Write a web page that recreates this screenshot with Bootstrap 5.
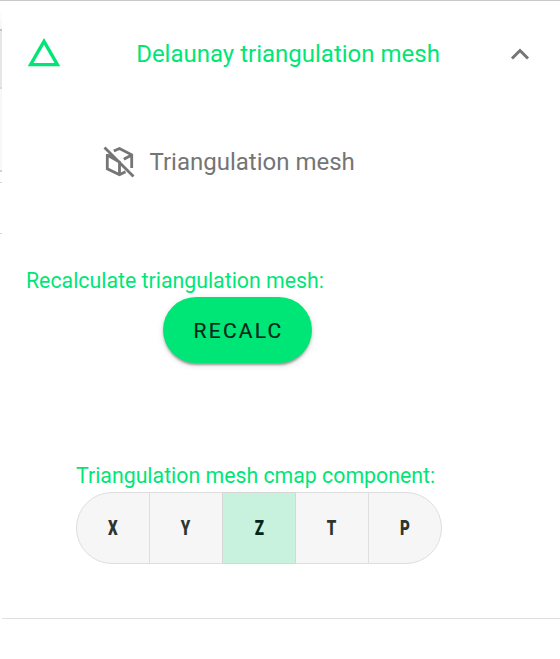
<!DOCTYPE html>
<html lang="en">
<head>
<meta charset="utf-8">
<meta name="viewport" content="width=device-width, initial-scale=1">
<title>Delaunay triangulation mesh</title>
<link href="https://cdn.jsdelivr.net/npm/bootstrap@5.3.0/dist/css/bootstrap.min.css" rel="stylesheet">
<style>
body{font-family:Roboto,sans-serif;height:659px;overflow:hidden;background:#fff}
.edge-strip{width:2px;height:658px;background:linear-gradient(#fff 0 8px,#f5f5f5 28px,#c4c4c4 28px 30px,#e6e6e6 30px 86px,#d9d9d9 86px 88px,#f8f8f8 88px 169px,#d2d2d2 169px 171px,#fff 171px 181px,#d4d4d4 181px 182px,#fff 182px 232px,#d4d4d4 232px 233px,#fff 233px)}
.page-top{border-top:1px solid #c8c8c8}
.panel{height:618px;border-bottom:1px solid #e0e0e0}
.panel-head{height:106px;padding:0 26px 0 24px}
.green{color:#00e676}
.panel-title{font-size:24px;line-height:32px;padding-left:8px}
.mesh-toggle{height:110px;padding-left:99px;gap:12.5px;color:#757575;font-size:24px}
.recalc-block{margin:49px 0 0 24px;width:300px}
.field-label{font-size:21.3px;line-height:29px;padding-bottom:2px;white-space:nowrap}
.btn-recalc{--bs-btn-bg:#00e676;--bs-btn-color:#04271a;--bs-btn-hover-bg:#00d66e;width:149px;height:66px;margin-left:137px;border:0;padding:3px 10px 0 12px;font-size:21px;font-weight:400;letter-spacing:2.2px;-webkit-text-stroke:.2px;box-shadow:0 4px 2px -2px rgba(0,0,0,.2),0 2px 3px rgba(0,0,0,.18),0 2px 7px rgba(0,0,0,.12)}
.cmap-block{margin:98px 0 0 74px;width:366px}
.cmap-group{height:72px}
.cmap-group .btn{flex:1 1 0;border-color:#dedede;background:#f6f6f6;color:#2c3531;font-size:21px;font-weight:900;padding:2px 0 0;border-radius:36px}
.cmap-group .btn.active{background:#c8f1de;color:#04251a;border-color:#d5d8d6}
.glyph-narrow{display:inline-block;transform:scaleX(.72)}
</style>
</head>
<body class="d-flex flex-column">
<div class="page-top d-flex">
  <div class="edge-strip flex-shrink-0"></div>
  <main class="flex-grow-1">
    <section class="panel">
      <header class="panel-head d-flex align-items-center justify-content-between green">
        <svg width="36" height="36" viewBox="0 0 36 36" fill="none" stroke="currentColor" stroke-width="3.3"><path d="M18 5.4L4.6 28.6H31.4Z"/></svg>
        <div class="panel-title">Delaunay triangulation mesh</div>
        <svg width="28" height="28" viewBox="0 0 28 28" fill="none" stroke="#757575" stroke-width="3"><path d="M6 18.5L14 10.5L22 18.5"/></svg>
      </header>
      <div class="mesh-toggle d-flex align-items-center">
        <svg width="36" height="36" viewBox="0 0 36 36" fill="none" stroke="currentColor" stroke-width="2.8"><path d="M3.5 3.5L32.5 32.5M12.8 7L18.5 4.5L30.7 10.8V24M30.7 11L22.8 15.3M6.3 10V24.8L18.5 30.8L24.5 27.8M6.3 11L18.5 18V30.8"/></svg>
        <span>Triangulation mesh</span>
      </div>
      <div class="recalc-block">
        <div class="field-label green">Recalculate triangulation mesh:</div>
        <button class="btn btn-recalc rounded-pill d-flex align-items-center justify-content-center" type="button">RECALC</button>
      </div>
      <div class="cmap-block">
        <div class="field-label green">Triangulation mesh cmap component:</div>
        <div class="btn-group cmap-group d-flex" role="group" aria-label="Color map component">
          <button class="btn" type="button"><span class="glyph-narrow">X</span></button>
          <button class="btn" type="button"><span class="glyph-narrow">Y</span></button>
          <button class="btn active" type="button"><span class="glyph-narrow">Z</span></button>
          <button class="btn" type="button"><span class="glyph-narrow">T</span></button>
          <button class="btn" type="button"><span class="glyph-narrow">P</span></button>
        </div>
      </div>
    </section>
  </main>
</div>
<script src="https://cdn.jsdelivr.net/npm/bootstrap@5.3.0/dist/js/bootstrap.bundle.min.js"></script>
</body>
</html>
